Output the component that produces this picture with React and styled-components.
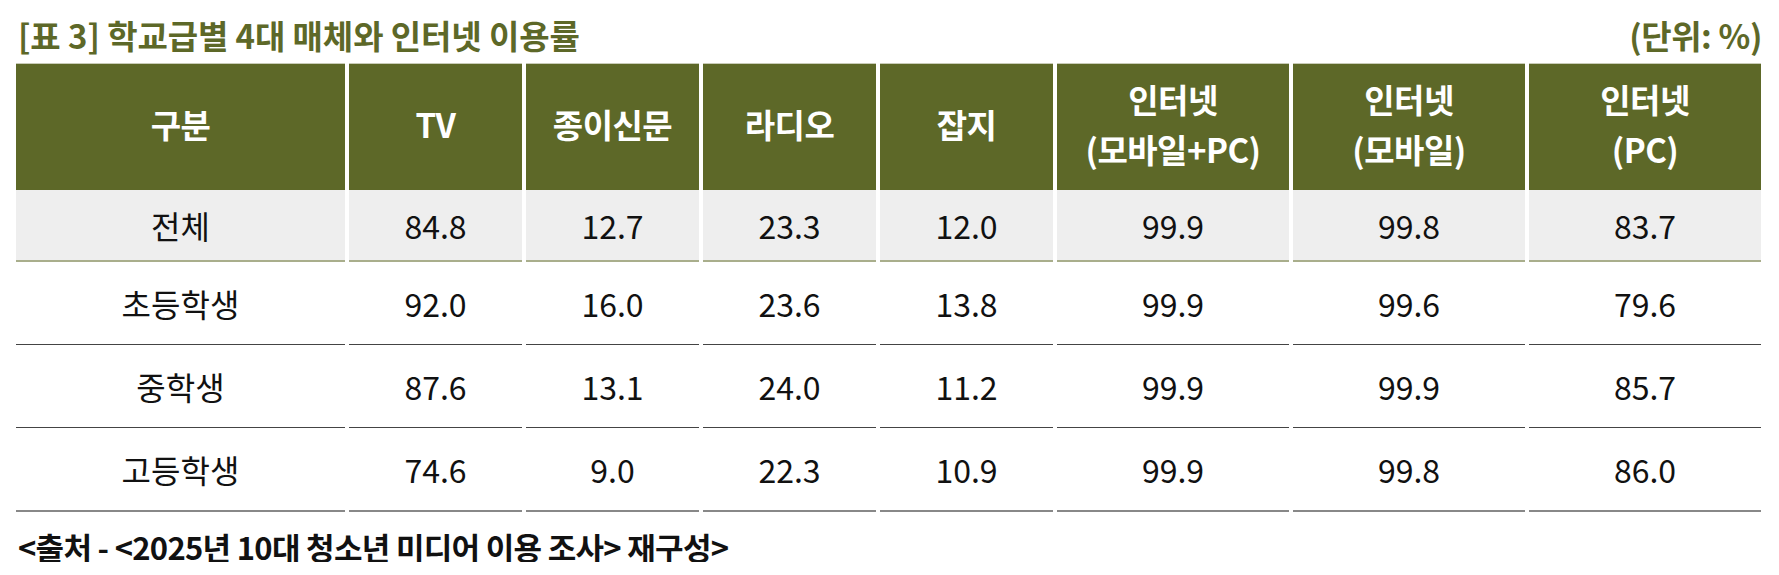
import styled, { createGlobalStyle } from "styled-components";

const GlobalStyle = createGlobalStyle`
  body {
    margin: 0;
    background: #ffffff;
    font-family: "Noto Sans CJK KR", "Noto Sans", sans-serif;
  }
`;

const Page = styled.div`
  width: 1779px;
  padding: 0 17px 0 16px;
  box-sizing: border-box;
`;

const TitleRow = styled.div`
  height: 63px;
  display: flex;
  justify-content: space-between;
  align-items: flex-end;
  padding-bottom: 11px;
  box-sizing: border-box;
`;

const Title = styled.h2`
  margin: 0 0 0 2px;
  font-size: 33px;
  font-weight: 700;
  line-height: 1;
  color: #5d6828;
  letter-spacing: -0.1px;
`;

const Unit = styled.span`
  font-size: 33px;
  font-weight: 700;
  line-height: 1;
  color: #5d6828;
  letter-spacing: -0.4px;
`;

const Grid = styled.div`
  display: grid;
  grid-template-columns: 329px repeat(4, 173px) repeat(3, 232px);
  column-gap: 4px;
`;

const HeadCell = styled.div`
  height: 127px;
  background: #5d6828;
  border-top: 1px solid #c9ccb8;
  box-sizing: border-box;
  padding-bottom: 6px;
  color: #ffffff;
  font-size: 33px;
  font-weight: 700;
  line-height: 50px;
  display: flex;
  align-items: center;
  justify-content: center;
  text-align: center;
  letter-spacing: -0.5px;
`;

const Cell = styled.div`
  height: ${(p) => (p.$first ? 72 : p.$last ? 84 : 83)}px;
  box-sizing: border-box;
  background: ${(p) => (p.$first ? "#eeeeee" : "#ffffff")};
  border-bottom: ${(p) =>
    p.$first ? "2px solid #a9ae8c" : p.$last ? "2px solid #888888" : "1px solid #444444"};
  color: #111111;
  font-size: 32px;
  font-weight: 400;
  display: flex;
  align-items: center;
  justify-content: center;
`;

const Source = styled.p`
  margin: 19px 0 0 2px;
  font-size: 31px;
  font-weight: 700;
  line-height: 1;
  color: #111111;
  letter-spacing: -0.7px;
`;

const headers = [
  ["구분"],
  ["TV"],
  ["종이신문"],
  ["라디오"],
  ["잡지"],
  ["인터넷", "(모바일+PC)"],
  ["인터넷", "(모바일)"],
  ["인터넷", "(PC)"],
];

const rows = [
  ["전체", "84.8", "12.7", "23.3", "12.0", "99.9", "99.8", "83.7"],
  ["초등학생", "92.0", "16.0", "23.6", "13.8", "99.9", "99.6", "79.6"],
  ["중학생", "87.6", "13.1", "24.0", "11.2", "99.9", "99.9", "85.7"],
  ["고등학생", "74.6", "9.0", "22.3", "10.9", "99.9", "99.8", "86.0"],
];

export default function App() {
  return (
    <Page>
      <GlobalStyle />
      <TitleRow>
        <Title>[표 3] 학교급별 4대 매체와 인터넷 이용률</Title>
        <Unit>(단위: %)</Unit>
      </TitleRow>
      <Grid>
        {headers.map((h, i) => (
          <HeadCell key={i}>
            <div>
              {h.map((line) => (
                <div key={line}>{line}</div>
              ))}
            </div>
          </HeadCell>
        ))}
        {rows.map((r, ri) =>
          r.map((v, ci) => (
            <Cell key={`${ri}-${ci}`} $first={ri === 0} $last={ri === rows.length - 1}>
              {v}
            </Cell>
          ))
        )}
      </Grid>
      <Source>&lt;출처 - &lt;2025년 10대 청소년 미디어 이용 조사&gt; 재구성&gt;</Source>
    </Page>
  );
}
